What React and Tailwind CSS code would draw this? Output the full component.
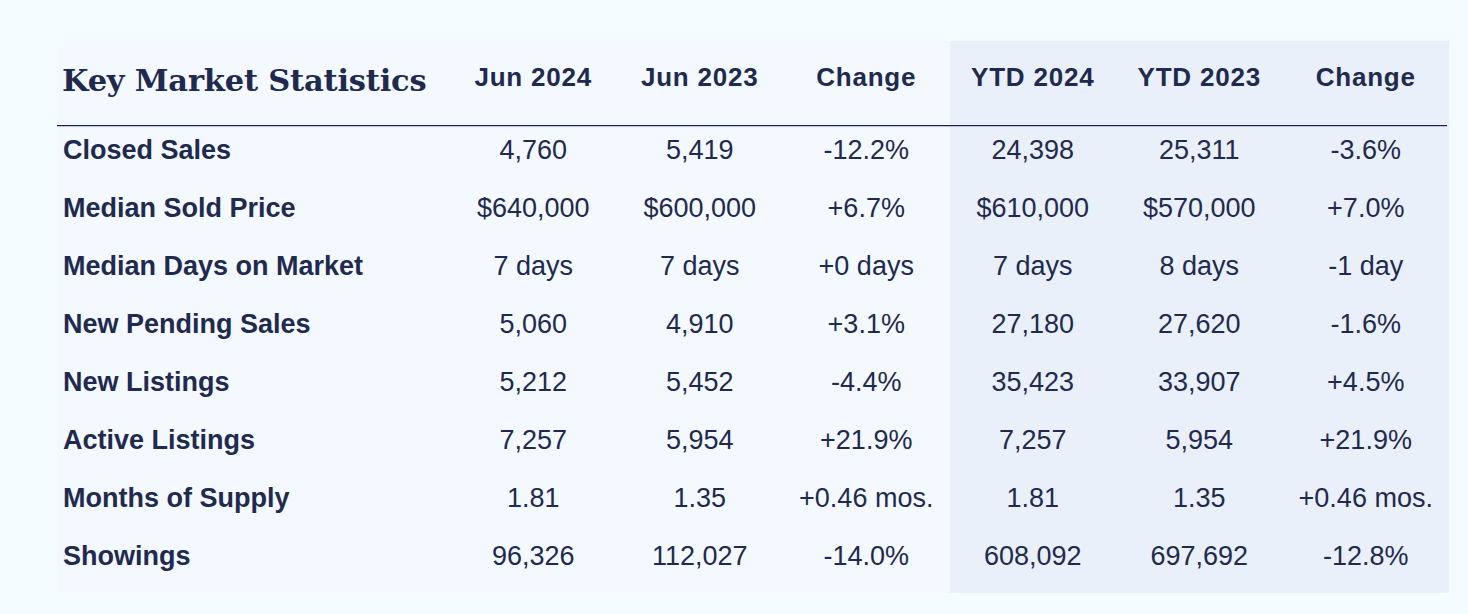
import React from 'react'

const ROWS = [
  ['Closed Sales', '4,760', '5,419', '-12.2%', '24,398', '25,311', '-3.6%'],
  ['Median Sold Price', '$640,000', '$600,000', '+6.7%', '$610,000', '$570,000', '+7.0%'],
  ['Median Days on Market', '7 days', '7 days', '+0 days', '7 days', '8 days', '-1 day'],
  ['New Pending Sales', '5,060', '4,910', '+3.1%', '27,180', '27,620', '-1.6%'],
  ['New Listings', '5,212', '5,452', '-4.4%', '35,423', '33,907', '+4.5%'],
  ['Active Listings', '7,257', '5,954', '+21.9%', '7,257', '5,954', '+21.9%'],
  ['Months of Supply', '1.81', '1.35', '+0.46 mos.', '1.81', '1.35', '+0.46 mos.'],
  ['Showings', '96,326', '112,027', '-14.0%', '608,092', '697,692', '-12.8%'],
]

const HEADERS = ['Jun 2024', 'Jun 2023', 'Change', 'YTD 2024', 'YTD 2023', 'Change']

const sans = { fontFamily: '"Liberation Sans", Arial, sans-serif' }

export default function App() {
  return (
    <div className="min-h-screen bg-[#f4fcff] pt-[41px] pl-[57px] text-[#1f2a4e]" style={sans}>
      <div className="grid w-[1392px] grid-cols-[393px_repeat(6,166.5px)] bg-[#f3f9fe]">
        {/* ── Header ───────────────────────── */}
        <div className="flex h-[84px] items-center pb-[5px] pl-[5px]">
          <h1 className="font-['DejaVu_Serif',serif] text-[30.5px] font-bold leading-none tracking-[-0.2px]">
            Key Market Statistics
          </h1>
        </div>
        {HEADERS.map((h, i) => (
          <div
            key={i}
            className={`flex h-[84px] items-center justify-center pb-[11px] text-[26px] font-bold tracking-[0.8px] ${i > 2 ? 'bg-[#e9f0f9]' : ''}`}
          >
            {h}
          </div>
        ))}

        {/* rule */}
        <div className="col-span-4 h-[2px] border-t border-[#1e2646] bg-[#b3bfdc]" />
        <div className="col-span-3 bg-[#e9f0f9] pr-[2px]">
          <div className="h-[2px] border-t border-[#1e2646] bg-[#b3bfdc]" />
        </div>

        {/* ── Rows ─────────────────────────── */}
        {ROWS.map((row, r) =>
          row.map((cell, c) => {
            const last = r === ROWS.length - 1
            const size = last ? 'h-[60px] pb-[14px]' : 'h-[58px] pb-[12px]'
            if (c === 0) {
              return (
                <div key={`${r}-${c}`} className={`flex items-center pl-[6px] text-[27px] font-bold ${size}`}>
                  {cell}
                </div>
              )
            }
            return (
              <div
                key={`${r}-${c}`}
                className={`flex items-center justify-center text-[27px] ${size} ${c > 3 ? 'bg-[#e9f0f9]' : ''}`}
              >
                {cell}
              </div>
            )
          })
        )}
      </div>
    </div>
  )
}
